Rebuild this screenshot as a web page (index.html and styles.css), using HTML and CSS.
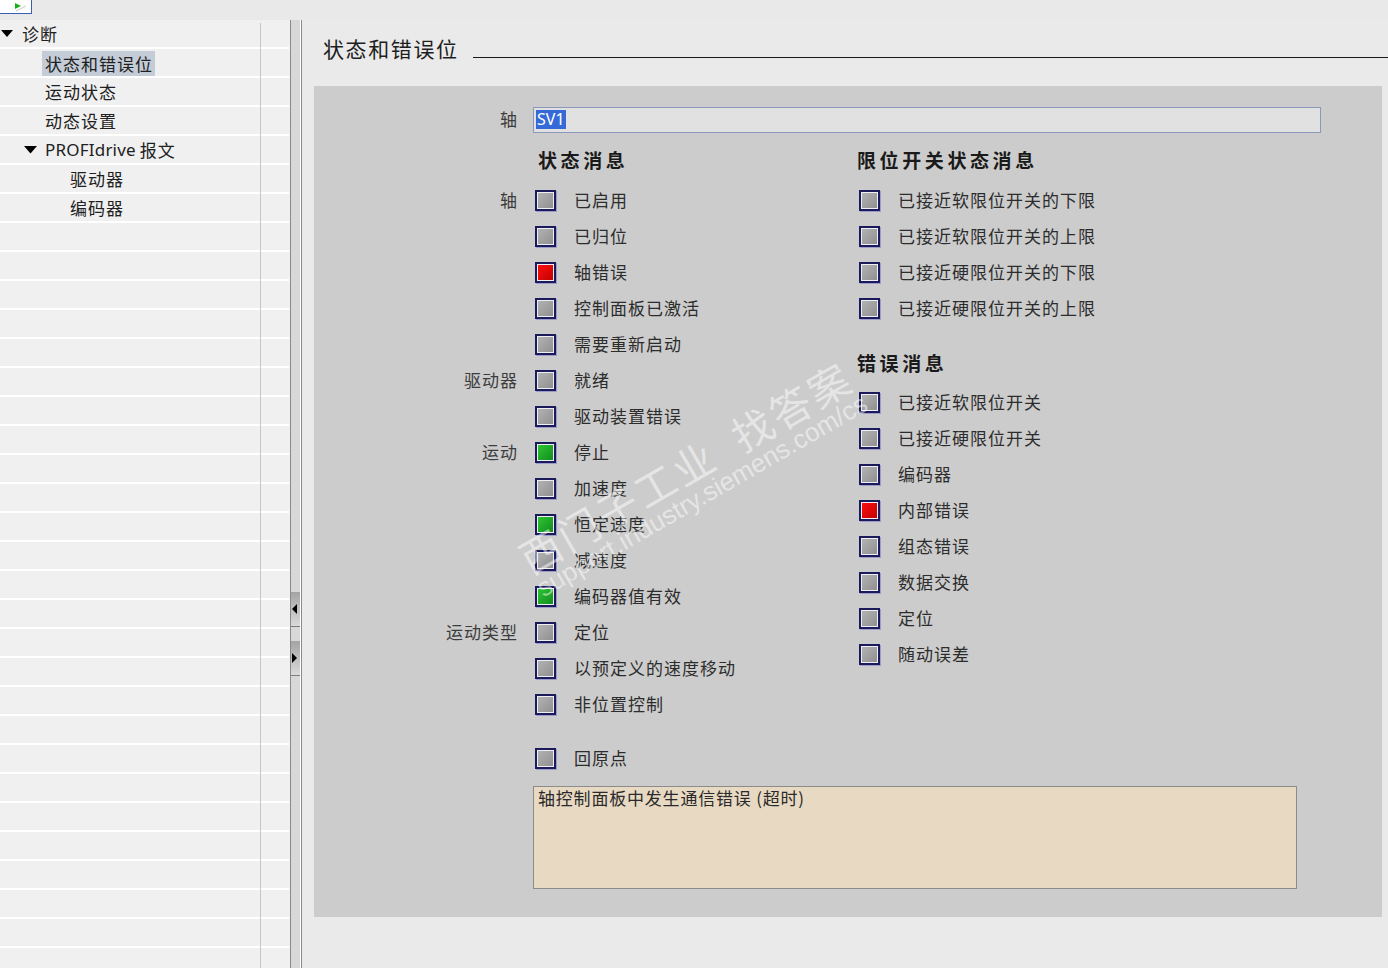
FILE: index.html
```html
<!DOCTYPE html>
<html lang="zh-CN">
<head>
<meta charset="utf-8">
<title>状态和错误位</title>
<link rel="stylesheet" href="styles.css">
</head>
<body>
<div class="topbar">
  <div class="tab">
    <svg width="14" height="10" viewBox="0 0 14 10"><polygon points="2,1 8,4 2,7" fill="#18b018"/><line x1="3" y1="9" x2="13" y2="4" stroke="#c8c8c8" stroke-width="1"/></svg>
  </div>
</div>
<div class="main">
  <div class="tree">
    <div class="trow l0"><svg class="tri" width="12" height="8" viewBox="0 0 12 8"><polygon points="0,0 12,0 6,7" fill="#000"/></svg><span class="tt">诊断</span></div>
    <div class="trow l1"><span class="tt sel">状态和错误位</span></div>
    <div class="trow l1"><span class="tt pad">运动状态</span></div>
    <div class="trow l1"><span class="tt pad">动态设置</span></div>
    <div class="trow l1t"><svg class="tri2" width="13" height="8" viewBox="0 0 13 8"><polygon points="0,0 13,0 6.5,7.5" fill="#000"/></svg><span class="tt"><span class="lat">PROFIdrive</span> 报文</span></div>
    <div class="trow l2"><span class="tt">驱动器</span></div>
    <div class="trow l2"><span class="tt">编码器</span></div>
    <div class="trow"></div><div class="trow"></div><div class="trow"></div><div class="trow"></div><div class="trow"></div>
    <div class="trow"></div><div class="trow"></div><div class="trow"></div><div class="trow"></div><div class="trow"></div>
    <div class="trow"></div><div class="trow"></div><div class="trow"></div><div class="trow"></div><div class="trow"></div>
    <div class="trow"></div><div class="trow"></div><div class="trow"></div><div class="trow"></div><div class="trow"></div>
    <div class="trow"></div><div class="trow"></div><div class="trow"></div><div class="trow"></div><div class="trow"></div>
    <div class="trow"></div>
  </div>
  <div class="splitter">
    <div class="sbtn"><svg width="6" height="10" viewBox="0 0 6 10"><polygon points="5,0 5,10 0,5" fill="#000"/></svg></div>
    <div class="sbtn second"><svg width="6" height="10" viewBox="0 0 6 10"><polygon points="0,0 0,10 5,5" fill="#000"/></svg></div>
  </div>
  <div class="content">
    <div class="titlerow">
      <span class="title">状态和错误位</span>
      <span class="titleline"></span>
    </div>
    <div class="panel">
      <div class="axisrow">
        <span class="rlabel">轴</span>
        <div class="input"><span class="selected">SV1</span></div>
      </div>
      <div class="cols">
        <div class="col1">
          <div class="head h1">状态消息</div>
          <div class="row"><span class="rlabel">轴</span><span class="box"></span><span class="txt">已启用</span></div>
          <div class="row"><span class="rlabel"></span><span class="box"></span><span class="txt">已归位</span></div>
          <div class="row"><span class="rlabel"></span><span class="box red"></span><span class="txt">轴错误</span></div>
          <div class="row"><span class="rlabel"></span><span class="box"></span><span class="txt">控制面板已激活</span></div>
          <div class="row"><span class="rlabel"></span><span class="box"></span><span class="txt">需要重新启动</span></div>
          <div class="row"><span class="rlabel">驱动器</span><span class="box"></span><span class="txt">就绪</span></div>
          <div class="row"><span class="rlabel"></span><span class="box"></span><span class="txt">驱动装置错误</span></div>
          <div class="row"><span class="rlabel">运动</span><span class="box green"></span><span class="txt">停止</span></div>
          <div class="row"><span class="rlabel"></span><span class="box"></span><span class="txt">加速度</span></div>
          <div class="row"><span class="rlabel"></span><span class="box green"></span><span class="txt">恒定速度</span></div>
          <div class="row"><span class="rlabel"></span><span class="box"></span><span class="txt">减速度</span></div>
          <div class="row"><span class="rlabel"></span><span class="box green"></span><span class="txt">编码器值有效</span></div>
          <div class="row"><span class="rlabel">运动类型</span><span class="box"></span><span class="txt">定位</span></div>
          <div class="row"><span class="rlabel"></span><span class="box"></span><span class="txt">以预定义的速度移动</span></div>
          <div class="row"><span class="rlabel"></span><span class="box"></span><span class="txt">非位置控制</span></div>
          <div class="row gaprow"><span class="rlabel"></span><span class="box"></span><span class="txt">回原点</span></div>
        </div>
        <div class="col2">
          <div class="head">限位开关状态消息</div>
          <div class="row"><span class="box"></span><span class="txt">已接近软限位开关的下限</span></div>
          <div class="row"><span class="box"></span><span class="txt">已接近软限位开关的上限</span></div>
          <div class="row"><span class="box"></span><span class="txt">已接近硬限位开关的下限</span></div>
          <div class="row"><span class="box"></span><span class="txt">已接近硬限位开关的上限</span></div>
          <div class="head h2">错误消息</div>
          <div class="row"><span class="box"></span><span class="txt">已接近软限位开关</span></div>
          <div class="row"><span class="box"></span><span class="txt">已接近硬限位开关</span></div>
          <div class="row"><span class="box"></span><span class="txt">编码器</span></div>
          <div class="row"><span class="box red"></span><span class="txt">内部错误</span></div>
          <div class="row"><span class="box"></span><span class="txt">组态错误</span></div>
          <div class="row"><span class="box"></span><span class="txt">数据交换</span></div>
          <div class="row"><span class="box"></span><span class="txt">定位</span></div>
          <div class="row"><span class="box"></span><span class="txt">随动误差</span></div>
        </div>
      </div>
      <div class="msg">轴控制面板中发生通信错误 (超时)</div>
      <div class="watermark">
        <div class="wm1">西门子工业&nbsp;&nbsp;找答案</div>
        <div class="wm2">support.industry.siemens.com/cs</div>
      </div>
    </div>
  </div>
</div>
</body>
</html>
```
FILE: styles.css
```css
* { box-sizing: border-box; }
html, body { margin: 0; padding: 0; }
body {
  width: 1388px;
  height: 968px;
  overflow: hidden;
  background: #eaeaea;
  font-family: "Noto Sans CJK SC", "Noto Sans", sans-serif;
  color: #262626;
}
.topbar {
  height: 20px;
  background: #e9e9e9;
}
.tab {
  width: 32px;
  height: 14px;
  background: #ffffff;
  border-right: 1px solid #3a5cb4;
  border-bottom: 1px solid #3a5cb4;
  display: flex;
  justify-content: flex-end;
  align-items: flex-start;
  padding: 2px 4px 0 0;
}
.tab svg { display: block; }
.main {
  display: flex;
  height: 948px;
}
.tree {
  width: 290px;
  background: #f0f0f0;
  position: relative;
  overflow: hidden;
}
.tree::after {
  content: "";
  position: absolute;
  left: 260px;
  top: 3px;
  bottom: 0;
  width: 1px;
  background: #c6c6c6;
}
.trow {
  height: 29px;
  border-bottom: 2px solid #ffffff;
  width: 289px;
  display: flex;
  align-items: center;
  font-size: 17px;
  letter-spacing: 1px;
  color: #202020;
  line-height: 1;
}
.l0 { padding-left: 1px; }
.l0 .tri { margin-right: 9px; }
.l1 { padding-left: 42px; }
.l1t { padding-left: 24px; }
.l1t .tri2 { margin-right: 8px; }
.l2 { padding-left: 70px; }
.tt { display: inline-flex; align-items: center; white-space: nowrap; }
.pad { padding-left: 3px; }
.sel {
  background: #c4ccd7;
  height: 25px;
  padding: 0 2px 0 3px;
  margin-top: 1px;
}
.lat { font-family: "Noto Sans", sans-serif; letter-spacing: 0.2px; margin-right: 4px; }
.splitter {
  width: 11px;
  background: #d8d8d8;
  border-left: 1px solid #8a8a8a;
  border-right: 1px solid #ffffff;
  padding-top: 572px;
  display: flex;
  flex-direction: column;
}
.sbtn {
  height: 35px;
  background: linear-gradient(to bottom, #a4a4a4, #dadada);
  border-bottom: 1px solid #7c7c7c;
  display: flex;
  align-items: center;
  padding-left: 1px;
}
.sbtn svg { display: block; }
.second { margin-top: 14px; }
.content {
  flex: 1;
  border-left: 1px solid #8a8a8a;
  background: #eaeaea;
  padding-top: 13px;
}
.titlerow {
  display: flex;
  align-items: flex-end;
  height: 31px;
  padding-left: 21px;
}
.title {
  font-size: 21px;
  letter-spacing: 1.6px;
  line-height: 30px;
  padding-bottom: 1px;
  color: #1e1e1e;
}
.titleline {
  flex: 1;
  height: 1px;
  background: #1a1a1a;
  margin-left: 14px;
  margin-bottom: 6px;
}
.panel {
  position: relative;
  margin: 22px 6px 0 12px;
  height: 831px;
  background: #cccccc;
  padding-top: 21px;
  overflow: hidden;
}
.axisrow {
  display: flex;
  align-items: center;
  height: 26px;
}
.axisrow .rlabel { padding-bottom: 3px; }
.rlabel {
  width: 204px;
  flex: none;
  text-align: right;
  font-size: 17px;
  color: #3c3c3c;
  letter-spacing: 1px;
  padding-bottom: 2px;
}
.input {
  margin-left: 15px;
  width: 788px;
  height: 26px;
  background: #e1e1e1;
  border: 1px solid #8a98bc;
  padding: 2px 0 0 2px;
  display: flex;
  align-items: flex-start;
}
.selected {
  display: block;
  background: #3669d8;
  color: #ffffff;
  font-family: "Noto Sans", sans-serif;
  font-size: 16px;
  line-height: 19px;
  height: 19px;
  padding: 0 1px;
}
.cols {
  display: flex;
  margin-top: 9px;
}
.col1 { width: 543px; flex: none; }
.col2 { flex: 1; }
.head {
  height: 40px;
  display: flex;
  align-items: center;
  font-size: 19px;
  font-weight: bold;
  letter-spacing: 3.6px;
  color: #1a1a1a;
  padding-bottom: 6px;
}
.h1 { padding-left: 224px; }
.h2 { margin-top: 18px; padding-bottom: 4px; }
.row {
  height: 36px;
  display: flex;
  align-items: center;
}
.gaprow { margin-top: 18px; }
.box {
  flex: none;
  width: 21px;
  height: 21px;
  border: 2px solid #1b1b5c;
  background: linear-gradient(135deg, #b4b4b4, #8e8e8e);
  box-shadow: inset 0 0 0 1px #eeeef4, 1px 1px 0 #9c9ccc;
  margin-left: 2px;
}
.col1 .box { margin-left: 17px; }
.box.red { background: linear-gradient(135deg, #ff1010, #c00000); }
.box.green { background: linear-gradient(135deg, #30c830, #0f8a1f); }
.txt {
  margin-left: 18px;
  font-size: 17px;
  letter-spacing: 1px;
  color: #2c2c2c;
  white-space: nowrap;
  padding-bottom: 2px;
}
.msg {
  margin: 10px 0 0 219px;
  width: 764px;
  height: 103px;
  background: #e8d9c3;
  border: 1px solid #8c8c8c;
  font-size: 17px;
  letter-spacing: 0.8px;
  color: #2a2a2a;
  padding: 0 4px;
  line-height: 21px;
}
.watermark {
  position: absolute;
  left: 166px;
  top: 356px;
  width: 440px;
  height: 100px;
  transform: rotate(-30deg);
  transform-origin: center;
  text-align: center;
  pointer-events: none;
}
.wm1 {
  font-size: 41px;
  line-height: 40px;
  letter-spacing: 3px;
  color: rgba(255, 255, 255, 0.5);
  white-space: nowrap;
}
.wm2 {
  font-family: "Liberation Sans", sans-serif;
  font-size: 26px;
  line-height: 28px;
  color: rgba(255, 255, 255, 0.5);
  white-space: nowrap;
}
```
